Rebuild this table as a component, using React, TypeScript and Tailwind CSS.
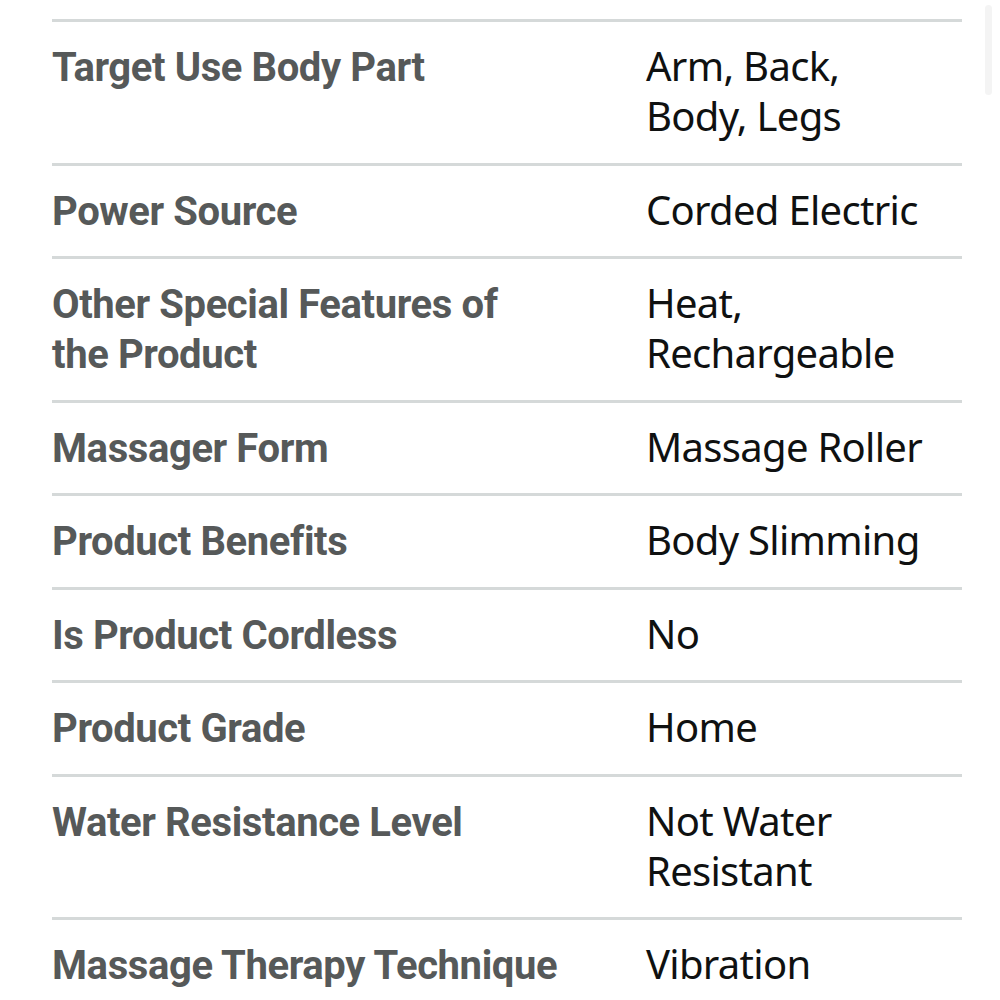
const specs: { label: string; value: string }[] = [
  { label: "Target Use Body Part", value: "Arm, Back, Body, Legs" },
  { label: "Power Source", value: "Corded Electric" },
  { label: "Other Special Features of the Product", value: "Heat, Rechargeable" },
  { label: "Massager Form", value: "Massage Roller" },
  { label: "Product Benefits", value: "Body Slimming" },
  { label: "Is Product Cordless", value: "No" },
  { label: "Product Grade", value: "Home" },
  { label: "Water Resistance Level", value: "Not Water Resistant" },
  { label: "Massage Therapy Technique", value: "Vibration" },
];

export default function App() {
  return (
    <div className="relative h-[1000px] w-[1000px] overflow-hidden bg-white font-['Noto_Sans',sans-serif]">
      <div className="absolute right-[8px] top-[5px] h-[90px] w-[7px] rounded-full bg-[#f4f4f4]" />
      <div className="ml-[52px] mt-[19px] w-[910px]">
        {specs.map((s) => (
          <div key={s.label} className="flex border-t-[3px] border-[#d5d9d9] pt-[19px] pb-[21.5px] text-[40px] leading-[50px]">
            <div className="-mb-[2px] w-[594px] shrink-0 pt-[2px] pr-[86px] font-['Roboto',sans-serif] font-bold tracking-[-0.4px] text-[#565959]">
              {s.label}
            </div>
            <div className="w-[290px] tracking-[-0.7px] text-[#0f1111]">{s.value}</div>
          </div>
        ))}
      </div>
    </div>
  );
}
